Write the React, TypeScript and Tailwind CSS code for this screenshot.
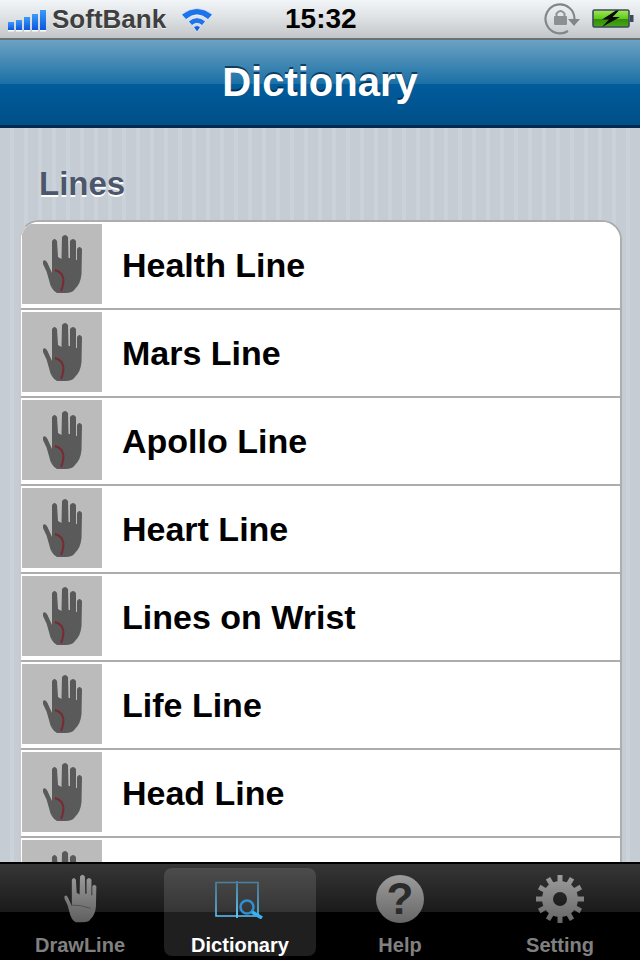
import React from 'react';

const lines = ['Health Line', 'Mars Line', 'Apollo Line', 'Heart Line', 'Lines on Wrist', 'Life Line', 'Head Line', ''];

const HAND =
  'M23 37 Q25.500 35 27.500 39 L32 49 L32 17 Q34.500 13 37 17 L38 33 L41.500 35 L42 13 Q45 9 48 13 L48.500 34 L50 34 L50 17 Q53 13 56 17 L56 36 L57 36 L57 25 Q59.500 21 62 25 L61.500 50 Q60.500 60 55 65 Q53 69 45 69 L37 69 Q31 66 29 56 Q27 47 23 40 Z';

const SignalBars = () => (
  <svg width="40" height="24" viewBox="0 0 40 24" className="shrink-0">
    <defs>
      <linearGradient id="sig" x1="0" y1="0" x2="0" y2="1">
        <stop offset="0" stopColor="#3d9bf5" />
        <stop offset="1" stopColor="#0a55e0" />
      </linearGradient>
    </defs>
    {[12, 10, 7, 4, 0].map((top, i) => (
      <g key={i}>
        <rect x={i * 8} y={top} width="6" height={20 - top} fill="url(#sig)" />
        <rect x={i * 8} y="20" width="6" height="1.500" fill="#fff" />
      </g>
    ))}
  </svg>
);

const Wifi = () => (
  <svg width="34" height="28" viewBox="0 0 34 28" fill="none" className="shrink-0">
    <path d="M1.500 9.500 Q17 -2.500 32.500 9.500 L28 14.500 Q17 5 6 14.500 Z" fill="#1d74ea" stroke="#fff" strokeWidth="0.600" />
    <path d="M8.500 16.500 Q17 9 25.500 16.500 L22 20.500 Q17 16 12 20.500 Z" fill="#1d74ea" stroke="#fff" strokeWidth="0.600" />
    <path d="M13.500 22 Q17 19 20.500 22 L17 27 Z" fill="#0f5fe0" stroke="#fff" strokeWidth="0.600" />
  </svg>
);

const RotationLock = () => (
  <svg width="38" height="36" viewBox="0 0 38 36" fill="none" className="shrink-0">
    <path d="M25 30 A14.500 14.500 0 1 1 31.500 18" stroke="#808788" strokeWidth="2.200" />
    <path d="M25 18 L37 18 L31 25 Z" fill="#808788" />
    <rect x="11" y="15" width="13" height="9" rx="1" fill="#8b9192" />
    <path d="M13.500 15 V12.500 Q17.500 7.500 21.500 12.500 V15" stroke="#8b9192" strokeWidth="2" />
  </svg>
);

const Battery = () => (
  <svg width="42" height="20" viewBox="0 0 42 20" className="shrink-0">
    <defs>
      <linearGradient id="bat" x1="0" y1="0" x2="0" y2="1">
        <stop offset="0" stopColor="#a2e85a" />
        <stop offset="0.500" stopColor="#62c81e" />
        <stop offset="0.520" stopColor="#2f8f0a" />
        <stop offset="1" stopColor="#4aa814" />
      </linearGradient>
    </defs>
    <rect x="1" y="1" width="36" height="17" rx="1.500" fill="url(#bat)" stroke="#3c4a5c" strokeWidth="1.600" />
    <rect x="38" y="6" width="3.500" height="7" fill="#3c4a5c" />
    <path d="M24 1.500 L10 10.500 L17 10.500 L10 18 L28 8 L20.500 8 L27 1.500 Z" fill="#0a0a0a" />
  </svg>
);

const Thumb = () => (
  <div className="w-20 h-20 shrink-0 bg-[#bbbbbb]">
    <svg width="80" height="80" viewBox="2 0 80 80" className="blur-[0.6px]">
      <path d={HAND} fill="#5a5a5a" />
      <path d="M35 46 Q48 50 41 67" fill="none" stroke="#7a2a30" strokeWidth="2" />
    </svg>
  </div>
);

const Row = ({ label, first }: { label: string; first: boolean }) => (
  <div className={`flex items-start h-[88px] bg-white pt-0.5 pl-px ${first ? 'rounded-t-[18px] overflow-hidden' : ''} border-b-2 border-[#adadad]`}>
    <Thumb />
    <div className="h-20 flex items-center pl-5 pt-0.5 font-bold text-[34px] text-black">{label}</div>
  </div>
);

const DrawLineIcon = () => (
  <svg width="36" height="50" viewBox="20 10 44 61" preserveAspectRatio="none" className="shrink-0">
    <defs>
      <linearGradient id="tabg" x1="0" y1="0" x2="0" y2="1">
        <stop offset="0" stopColor="#9a9a9a" />
        <stop offset="1" stopColor="#5f5f5f" />
      </linearGradient>
    </defs>
    <path d={HAND} fill="url(#tabg)" />
    <path d="M31 48 Q42 47 55 52" fill="none" stroke="#4a4a4a" strokeWidth="1" />
  </svg>
);

const DictionaryIcon = () => (
  <svg width="50" height="40" viewBox="0 0 50 40" fill="none" className="shrink-0">
    <defs>
      <linearGradient id="bookg" gradientUnits="userSpaceOnUse" x1="0" y1="3" x2="0" y2="38">
        <stop offset="0" stopColor="#4a7f9e" />
        <stop offset="1" stopColor="#5cc6fa" />
      </linearGradient>
    </defs>
    <path d="M1 3.500 H22 V37 H1 Z M22 3.500 H43 V37 H22" stroke="url(#bookg)" strokeWidth="1.600" />
    <path d="M22 2 V39" stroke="url(#bookg)" strokeWidth="1.800" />
    <circle cx="32" cy="28" r="6.500" stroke="#2f8fd0" strokeWidth="2.500" />
    <path d="M37 33 L47 39" stroke="#39b0f2" strokeWidth="3.600" />
  </svg>
);

const HelpIcon = () => (
  <svg width="48" height="48" viewBox="0 0 48 48" className="shrink-0">
    <defs>
      <linearGradient id="helpg" x1="0" y1="0" x2="0" y2="1">
        <stop offset="0" stopColor="#9c9c9c" />
        <stop offset="1" stopColor="#666666" />
      </linearGradient>
    </defs>
    <circle cx="24" cy="24" r="24" fill="url(#helpg)" />
    <text x="24" y="39" textAnchor="middle" fontSize="44" fontWeight="700" fill="#2b2b2b" fontFamily="'Liberation Sans', sans-serif">?</text>
  </svg>
);

const SettingIcon = () => (
  <svg width="48" height="48" viewBox="0 0 48 48" className="shrink-0">
    <defs>
      <linearGradient id="gearg" gradientUnits="userSpaceOnUse" x1="0" y1="0" x2="0" y2="48">
        <stop offset="0" stopColor="#9c9c9c" />
        <stop offset="1" stopColor="#666666" />
      </linearGradient>
      <mask id="gearm">
        <rect width="48" height="48" fill="#fff" />
        <circle cx="24" cy="24" r="7" fill="#000" />
      </mask>
    </defs>
    <g mask="url(#gearm)">
      <rect width="48" height="48" fill="url(#gearg)" clipPath="url(#gearc)" />
    </g>
    <clipPath id="gearc">
      <circle cx="24" cy="24" r="18" />
      {Array.from({ length: 12 }).map((_, i) => (
        <rect key={i} x="21.500" y="0" width="5" height="12" transform={`rotate(${i * 30} 24 24)`} />
      ))}
    </clipPath>
  </svg>
);

const Tab = ({ label, active, children }: { label: string; active?: boolean; children: React.ReactNode }) => (
  <div className={`w-[152px] h-[88px] flex flex-col items-center justify-between pt-1.5 rounded-lg ${active ? 'bg-white/12' : ''}`}>
    <div className="h-[50px] flex items-center justify-center">{children}</div>
    <span className={`font-bold text-[20px] leading-[22px] ${active ? 'text-white' : 'text-[#808080]'}`}>{label}</span>
  </div>
);

export default function App() {
  return (
    <div className="w-[640px] h-[960px] flex flex-col overflow-hidden font-['Liberation_Sans',Arial,sans-serif]">
      <div className="h-10 shrink-0 relative flex items-center justify-between pl-2 pr-1.5 bg-[linear-gradient(180deg,#f1f5f8_0%,#e2e5e7_40%,#c3c6c8_100%)] border-b-2 border-[#6d7073]">
        <div className="flex items-center">
          <div className="pt-1.5"><SignalBars /></div>
          <span className="ml-1 font-bold text-[26px] leading-none text-[#3f3f3f] [text-shadow:0_1px_0_rgba(255,255,255,0.7)]">SoftBank</span>
          <div className="ml-[14px]"><Wifi /></div>
        </div>
        <span className="absolute left-[285px] top-[2px] font-bold text-[28px] leading-[34px] text-black">15:32</span>
        <div className="flex items-center gap-[11px]">
          <RotationLock />
          <Battery />
        </div>
      </div>

      <div className="h-[88px] shrink-0 flex items-center justify-center pb-1 bg-[linear-gradient(180deg,#6ca2c3_0%,#1b70a6_50%,#015c9b_50%,#004f89_97%,#012a4e_97%,#012a4e_100%)]">
        <h1 className="font-bold text-[40px] text-white leading-none [text-shadow:0_-2px_0_rgba(0,30,60,0.7)]">Dictionary</h1>
      </div>

      <div className="flex-1 min-h-0 overflow-hidden pl-[19px] pr-[18px] bg-[repeating-linear-gradient(90deg,#c5ccd4_0px,#c5ccd4_10px,#cbd2d9_10px,#cbd2d9_14px)]">
        <h2 className="pt-9 pb-[17px] pl-5 font-bold text-[33px] leading-[39px] text-[#4c566c] [text-shadow:0_2px_0_#ffffff]">Lines</h2>
        <div className="rounded-t-[20px] border-2 border-[#adadad] border-l-[#c9c9c9] bg-white">
          {lines.map((line, i) => (
            <Row key={i} label={line} first={i === 0} />
          ))}
        </div>
      </div>

      <div className="h-[98px] shrink-0 flex items-start justify-center gap-2 pt-1 border-t-2 border-black bg-[linear-gradient(180deg,#363636_0%,#1a1a1a_50%,#000000_50%,#000000_100%)]">
        <Tab label="DrawLine"><DrawLineIcon /></Tab>
        <Tab label="Dictionary" active><DictionaryIcon /></Tab>
        <Tab label="Help"><HelpIcon /></Tab>
        <Tab label="Setting"><SettingIcon /></Tab>
      </div>
    </div>
  );
}
